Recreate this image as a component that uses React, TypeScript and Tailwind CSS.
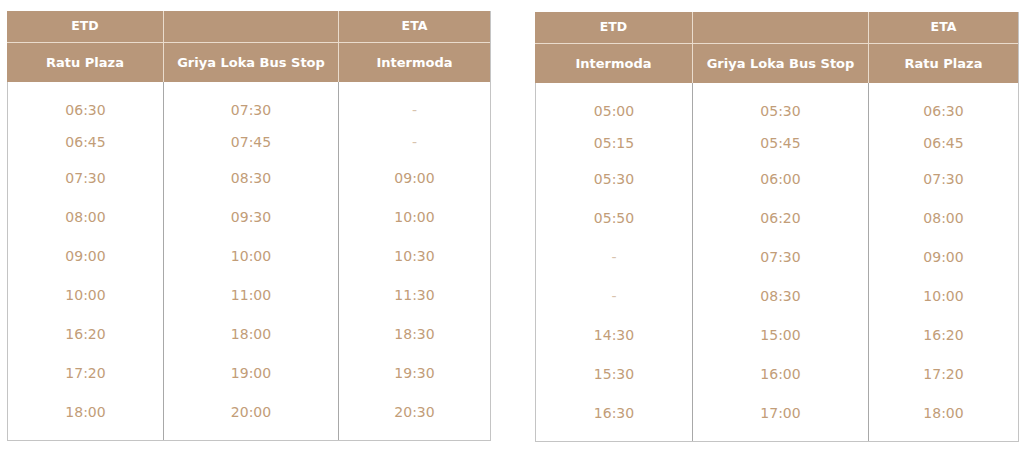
import React from "react";

interface Column {
  top: string;
  name: string;
  width: string;
  times: string[];
}

const rowHeights = ["h-[32px]", "h-[32px]", "h-[40px]", "h-[39px]", "h-[39px]", "h-[39px]", "h-[39px]", "h-[39px]", "h-[39px]"];

const leftTable: Column[] = [
  { top: "ETD", name: "Ratu Plaza", width: "w-[156px]", times: ["06:30", "06:45", "07:30", "08:00", "09:00", "10:00", "16:20", "17:20", "18:00"] },
  { top: "", name: "Griya Loka Bus Stop", width: "w-[175px]", times: ["07:30", "07:45", "08:30", "09:30", "10:00", "11:00", "18:00", "19:00", "20:00"] },
  { top: "ETA", name: "Intermoda", width: "w-[152px]", times: ["-", "-", "09:00", "10:00", "10:30", "11:30", "18:30", "19:30", "20:30"] },
];

const rightTable: Column[] = [
  { top: "ETD", name: "Intermoda", width: "w-[157px]", times: ["05:00", "05:15", "05:30", "05:50", "-", "-", "14:30", "15:30", "16:30"] },
  { top: "", name: "Griya Loka Bus Stop", width: "w-[176px]", times: ["05:30", "05:45", "06:00", "06:20", "07:30", "08:30", "15:00", "16:00", "17:00"] },
  { top: "ETA", name: "Ratu Plaza", width: "w-[150px]", times: ["06:30", "06:45", "07:30", "08:00", "09:00", "10:00", "16:20", "17:20", "18:00"] },
];

const Schedule: React.FC<{ columns: Column[] }> = ({ columns }) => {
  return (
    <div className="flex border-r border-b border-[#c4c4c4]">
      {columns.map((col, idx) => (
        <div key={idx} className={`${col.width} flex flex-col`}>
          <div className={`h-[32px] flex items-center justify-center bg-[#b8977a] text-white font-bold text-[12.5px] border-b border-[#eadccd] ${idx > 0 ? "border-l border-l-[#eadccd]" : ""}`}>
            {col.top}
          </div>
          <div className={`h-[39px] flex items-center justify-center bg-[#b8977a] text-white font-bold text-[13px] ${idx > 0 ? "border-l border-[#eadccd]" : ""}`}>
            {col.name}
          </div>
          <div className={`pt-[12px] pb-[8px] flex flex-col border-l ${idx > 0 ? "border-[#a8a8a8]" : "border-[#c4c4c4]"}`}>
            {col.times.map((t, i) => (
              <div key={i} className={`${rowHeights[i]} flex items-center justify-center text-[14px] ${t === "-" ? "text-[#d8c3ae]" : "text-[#c29d78]"}`}>
                {t}
              </div>
            ))}
          </div>
        </div>
      ))}
    </div>
  );
};

const App: React.FC = () => {
  return (
    <div className="w-[1024px] h-[451px] bg-white pt-[11px] pl-[7px] flex items-start gap-[44px]" style={{ fontFamily: '"DejaVu Sans", sans-serif' }}>
      <Schedule columns={leftTable} />
      <div className="pt-[1px]">
        <Schedule columns={rightTable} />
      </div>
    </div>
  );
};

export default App;
